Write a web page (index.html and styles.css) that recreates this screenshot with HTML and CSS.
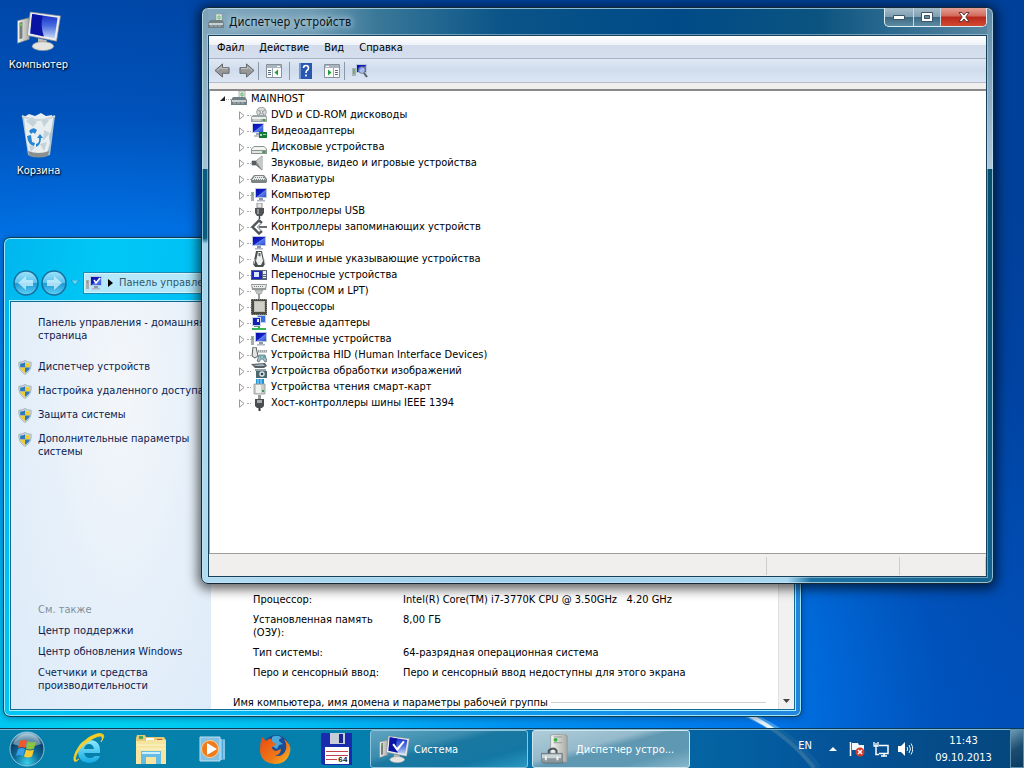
FILE: index.html
```html
<!DOCTYPE html>
<html lang="ru">
<head>
<meta charset="utf-8">
<title>Диспетчер устройств</title>
<link rel="stylesheet" href="styles.css">
</head>
<body>
<svg class="sprite" aria-hidden="true">
  <defs>
    <linearGradient id="g-screen" x1="0" y1="0" x2="1" y2="1"><stop offset="0" stop-color="#0a10a8"/><stop offset=".5" stop-color="#1420c8"/><stop offset=".55" stop-color="#5f80ea"/><stop offset="1" stop-color="#2c50d8"/></linearGradient>
    <linearGradient id="g-case" x1="0" y1="0" x2="1" y2="0"><stop offset="0" stop-color="#f6f6f2"/><stop offset="1" stop-color="#a8aaa6"/></linearGradient>
    <linearGradient id="g-big" x1="0" y1="0" x2="0" y2="1"><stop offset="0" stop-color="#1428c8"/><stop offset=".5" stop-color="#4a6ee0"/><stop offset="1" stop-color="#c8d8f8"/></linearGradient>
    <radialGradient id="g-orb" cx=".5" cy=".9" r=".9"><stop offset="0" stop-color="#38d0e8"/><stop offset=".4" stop-color="#0f6f9c"/><stop offset=".75" stop-color="#0a3f66"/><stop offset="1" stop-color="#a4cfe0"/></radialGradient>
    <linearGradient id="g-ie" x1="0" y1="0" x2="0" y2="1"><stop offset="0" stop-color="#8feaff"/><stop offset="1" stop-color="#12a8e0"/></linearGradient>
    <linearGradient id="g-nav" x1="0" y1="0" x2="0" y2="1"><stop offset="0" stop-color="#9fe4fb"/><stop offset=".48" stop-color="#5cc3ee"/><stop offset=".52" stop-color="#1f9ad4"/><stop offset="1" stop-color="#5ed2f8"/></linearGradient>
    <linearGradient id="g-fox" x1="0" y1="0" x2="1" y2="1"><stop offset="0" stop-color="#e84a10"/><stop offset=".6" stop-color="#f07818"/><stop offset="1" stop-color="#ffc020"/></linearGradient>
  </defs>
  <symbol id="i-pc" viewBox="0 0 46 42">
    <path d="M1 10l12-3v22L1 33z" fill="url(#g-case)" stroke="#7d8484" stroke-width=".7"/><path d="M3 12l3-1v17l-3 1z" fill="#777d7b"/><circle cx="4.500" cy="14" r="1.200" fill="#65d040"/>
    <path d="M14 1l31 4-4 26-30-6z" fill="#ececea" stroke="#858a90" stroke-width=".7"/><path d="M16 3l26 4-3 21-25-5z" fill="url(#g-big)"/><path d="M16 3l11 2q-3 9 1 21l-14-3z" fill="#0a14a4"/>
    <path d="M22 28l9 2-1 6h-8z" fill="#b8b8b4"/><ellipse cx="27" cy="36" rx="11" ry="4.500" fill="#e4e4e0" stroke="#9a9c98" stroke-width=".7"/>
  </symbol>
  <symbol id="i-bin" viewBox="0 0 37 46">
    <path d="M2 4h33l-5 39q-11 4-22 0z" fill="#a8c3d2"/><path d="M4 5l5-3 6 2 6-3 5 3 6-1 1 4-2 12-2 5 1 7-3 10-18 1-3-16z" fill="#e9eef0"/>
    <path d="M6 9l6-4 5 5-4 5zM21 7l8 1-5 7zM24 18l6 3-7 8zM20 32l7-2-3 9zM9 33l6 2-4 5z" fill="#c4d2da"/>
    <path d="M2 4q17 8 33 0" fill="none" stroke="#cbd6da" stroke-width="2"/>
    <path d="M9 19q4-5 8-1l-2 4q-2-3-4 0zM7 24l4-1 1 7 3 1-1 3q-6-1-7-10zM16 32q4-1 3-6h-2l3-4 3 4h-2q0 7-5 9z" fill="#2585d5"/><path d="M8 39q11 4 21 0l-1 5q-10 3-19 0z" fill="#8a8f90"/>
  </symbol>
  <symbol id="i-tools" viewBox="0 0 16 16"><path d="M8 0h6v10H8z" fill="#edf1ea" stroke="#8a9890" stroke-width=".7"/><path d="M10 2h2v3h-2z" fill="none" stroke="#62b070"/><path d="M0 9l2-3h12l2 3v5H0z" fill="#708086"/><path d="M1 9h14v2H1z" fill="#c8d0d2"/><path d="M2 12h12" stroke="#aab6ba" stroke-dasharray="3 1"/></symbol>
  <symbol id="i-dvd" viewBox="0 0 16 16"><circle cx="10.500" cy="5" r="4.800" fill="#d8dcdc" stroke="#888f8f" stroke-width=".8"/><path d="M7 3l3 2-2 3M14 3l-3 2 2 3" fill="none" stroke="#687070" stroke-width=".7"/><circle cx="10.500" cy="5" r="1.300" fill="#fff" stroke="#777" stroke-width=".6"/><path d="M0 10l2-2h13l1 2v5H0z" fill="#9aa4a2"/><path d="M1 10h14v2H1z" fill="#eef0ee"/><path d="M2 13h8" stroke="#f0f0f0"/><path d="M12 12h2v2h-2z" fill="#3ba044"/></symbol>
  <symbol id="i-video" viewBox="0 0 16 16"><path d="M1 0h12v10H1z" fill="#c8d0e4"/><path d="M2 1h10v8H2z" fill="url(#g-screen)"/><path d="M5 10h4v2H5z" fill="#9aa6bc"/><path d="M3 12h6v2H3z" fill="#c0c6d4"/><path d="M8 9h8v6H8z" fill="#177a38"/><path d="M9 11h2v2H9zM12 11h3v1h-3z" fill="#a7dfa0"/></symbol>
  <symbol id="i-disk" viewBox="0 0 16 16"><path d="M0 10l3-3h10l3 3v5H0z" fill="#8b9591"/><path d="M1 10l2-2h10l2 2v1H1z" fill="#f2f4f2"/><path d="M1 12h10v2H1z" fill="#dfe4df"/><path d="M12 12h2v2h-2z" fill="#37a745"/></symbol>
  <symbol id="i-sound" viewBox="0 0 16 16"><path d="M1 6h4l6-5v14l-6-5H1z" fill="#7d8484" stroke="#5f6668" stroke-width=".7"/><path d="M5 6l6-5v14z" fill="#c4cac8"/><path d="M1 6h4v4H1z" fill="#555d60"/></symbol>
  <symbol id="i-kbd" viewBox="0 0 16 16"><path d="M3 4h10l3 4v3l-1 1H1l-1-1V8z" fill="#7c8486"/><path d="M4 5h8l3 4H1z" fill="#e8eaea"/><path d="M4 6.500h9M3 8.500h11" stroke="#7e8688" stroke-dasharray="1 1"/></symbol>
  <symbol id="i-mon" viewBox="0 0 16 16"><path d="M1 1h14v10H1z" fill="#bfc7dc"/><path d="M2 2h12v8H2z" fill="url(#g-screen)"/><path d="M6 11h4v2H6z" fill="#8c98ae"/><path d="M4 13h8v1.500H4z" fill="#aeb6c6"/></symbol>
  <symbol id="i-comp" viewBox="0 0 16 16"><path d="M0 5h3v9H0z" fill="#a6adad"/><path d="M1 6h1v2H1z" fill="#50b548"/><path d="M4 1h12v10H4z" fill="#bfc7dc"/><path d="M5 2h10v8H5z" fill="url(#g-screen)"/><path d="M8 11h4v2H8z" fill="#8c98ae"/><path d="M6 13h8v1.500H6z" fill="#aeb6c6"/></symbol>
  <symbol id="i-usb" viewBox="0 0 16 16"><path d="M6 0h5v5H6z" fill="#e6e6e6" stroke="#787878" stroke-width=".8"/><path d="M4 5h9v5l-2 3H6l-2-3z" fill="#505356"/><path d="M6 6h2v5H6z" fill="#909496"/><path d="M8.500 13v3" stroke="#444" stroke-width="1.500"/></symbol>
  <symbol id="i-ctrl" viewBox="0 0 16 16"><path d="M11 4L8 1.500 1.500 8 8 14.500 11 12" fill="none" stroke="#4f5558" stroke-width="2.400"/><path d="M10 4.500L6.500 8l3.500 3.500" fill="none" stroke="#a4aaac" stroke-width="1.400"/><path d="M8 7h8v2H8z" fill="#6a7072"/></symbol>
  <symbol id="i-mouse" viewBox="0 0 16 16"><path d="M5 0h6l1 5 2 8-2 3H4l-2-3 2-8z" fill="#4b5053"/><path d="M7 1h3l2 9-2 4H7l-2-4z" fill="#f0f2f0"/><path d="M7.500 2v3l2 .5V2z" fill="#666"/><path d="M4 8l-1 5M13 8l1 5" stroke="#c8cccc"/></symbol>
  <symbol id="i-port" viewBox="0 0 16 16"><path d="M0 3h16v10H0z" fill="#59647c"/><path d="M1 4h10v8H1z" fill="#1a28bd"/><path d="M3 5h5v5H3z" fill="#dce6ff"/><path d="M12 4h3v3h-3zM12 8h3v1h-3zM12 10h3v1h-3z" fill="#e9ecf0"/></symbol>
  <symbol id="i-com" viewBox="0 0 16 16"><path d="M0 1h16l-1 6H1z" fill="#949b9b"/><path d="M1 2h14l-1 3H2z" fill="#e9ecea"/><path d="M3 3.500h10" stroke="#737a7a" stroke-dasharray="1 1"/><path d="M4 7h8l-2 4H6z" fill="#c1c6c4" stroke="#8a9090" stroke-width=".6"/><path d="M7 11h2v5H7z" fill="#999f9f"/></symbol>
  <symbol id="i-cpu" viewBox="0 0 16 16"><path d="M0 0h16v16H0z" fill="#4c4b44"/><path d="M0 15.500h16M15.500 0v16M0 .500h16M.500 0v16" stroke="#8a877a" stroke-dasharray="1 1"/><path d="M3 2h11v11H3z" fill="#bdbcb4"/><path d="M4 3h9v9H4z" fill="#d0cfc8"/></symbol>
  <symbol id="i-net" viewBox="0 0 16 16"><path d="M6 0h9v8H6z" fill="#b9cbe8"/><path d="M7 1h7v6H7z" fill="#3a70e0"/><path d="M1 2h9v9H1z" fill="#ccd5e8"/><path d="M2 3h7v7H2z" fill="#1220ba"/><path d="M6 4h2v3H6z" fill="#dfe8ff"/><path d="M3 11h5v1H3z" fill="#7b879a"/><path d="M1 14h14M8 11v4" stroke="#38b559" stroke-width="2"/></symbol>
  <symbol id="i-hid" viewBox="0 0 16 16"><path d="M2 0h3l2 9-3 2-3-2z" fill="#e3e5e4" stroke="#535a5d"/><path d="M7 3h9v3H7z" fill="#c8cece"/><path d="M7 4h9" stroke="#777" stroke-dasharray="1 1"/><path d="M6 14l2-6h6l2 6-2 1-2-3h-2l-2 3z" fill="#9fbec6" stroke="#5b717a" stroke-width=".8"/><path d="M9 10h1M12 10h2" stroke="#178a9a"/></symbol>
  <symbol id="i-img" viewBox="0 0 16 16"><path d="M0 1l14-1 2 3-3 2H4z" fill="#596166"/><path d="M2 2l10-1 2 2H5z" fill="#9fb4bc"/><path d="M4 6h11v2H4z" fill="#8fa6ac"/><path d="M5 8h11v7H5z" fill="#4e6870"/><circle cx="11" cy="11" r="2.700" fill="#dce8ec"/><circle cx="11" cy="11" r="1.300" fill="#33444a"/></symbol>
  <symbol id="i-card" viewBox="0 0 16 16"><path d="M5 0h8v5H5z" fill="#1d94dc"/><path d="M7 0v5M10 0v5" stroke="#b5e1fa"/><path d="M3 5h11v10H3z" fill="#c9cecb" stroke="#929996" stroke-width=".8"/><path d="M5 6h5v8H5z" fill="#f0f2f0"/><path d="M11 11h2v2h-2z" fill="#359f4b"/></symbol>
  <symbol id="i-1394" viewBox="0 0 16 16"><path d="M7 0h3v4H7z" fill="#999"/><path d="M4 4h9v7l-2 2H6l-2-2z" fill="#4a4d50"/><path d="M6 5h5v3H6z" fill="#a5a9aa"/><path d="M8.500 13v3" stroke="#333" stroke-width="2"/></symbol>
  <symbol id="i-shield" viewBox="0 0 16 16"><path d="M8 0q3 2 7 2 1 9-7 14Q0 11 1 2q4 0 7-2z" fill="#d5dce0" stroke="#7f909a" stroke-width=".7"/><path d="M8 2v6H2.500V3.500Q6 3.500 8 2z" fill="#2a7abf"/><path d="M8 2q2 1.500 5.500 1.500V8H8z" fill="#f2cb30"/><path d="M2.500 8H8v6Q3 11.500 2.500 8z" fill="#f2cb30"/><path d="M8 8h5.500Q13 11.500 8 14z" fill="#2a7abf"/></symbol>
  <symbol id="i-arrow" viewBox="0 0 18 16"><path d="M1 8l8-7v4h7v6H9v4z" fill="#979797" stroke="#5e6266"/><path d="M3 8l5-4v2h7" fill="none" stroke="#c9c9c9"/></symbol>
  <symbol id="i-panel" viewBox="0 0 16 14"><path d="M.500.500h15v13H.500z" fill="#fafafa" stroke="#87919c"/><path d="M1 1h14v3H1z" fill="#aab4bf"/><path d="M11 2.500h3" stroke="#fff"/><path d="M2 6.500h3M2 8.500h3M2 10.500h3" stroke="#5c6c80"/><path d="M6.500 4v9" stroke="#9aa4ae"/><path d="M12 5.500v6L8.500 8.500z" fill="#1f9f38"/></symbol>
</svg>

<main class="desktop">
  <svg class="streak" viewBox="0 0 100 60" aria-hidden="true"><path d="M2 0Q60 22 88 60" fill="none" stroke="#bff2ff" stroke-width="7" opacity=".35"/><path d="M4 0Q55 22 84 60" fill="none" stroke="#f4fdff" stroke-width="4" opacity=".9"/></svg>

  <nav class="shortcuts" aria-label="Рабочий стол">
    <a class="shortcut" href="#computer"><svg class="shortcut-pc"><use href="#i-pc"/></svg>Компьютер</a>
    <a class="shortcut" href="#bin"><svg class="shortcut-bin"><use href="#i-bin"/></svg>Корзина</a>
  </nav>

  <section class="window system" aria-label="Система">
    <header class="explorer-bar">
      <button class="nav-button" aria-label="Назад"><svg viewBox="0 0 26 26"><circle cx="13" cy="13" r="12" fill="url(#g-nav)" stroke="#176f9d" stroke-width="1.500"/><path d="M5 13l8-7v4h7v6h-7v4z" fill="#c9effc" opacity=".8"/></svg></button>
      <button class="nav-button" aria-label="Вперед"><svg viewBox="0 0 26 26"><circle cx="13" cy="13" r="12" fill="url(#g-nav)" stroke="#176f9d" stroke-width="1.500"/><path d="M21 13l-8-7v4H6v6h7v4z" fill="#c9effc" opacity=".8"/></svg></button>
      <button class="nav-history" aria-label="Последние страницы"><svg viewBox="0 0 8 5"><path d="M0 0h8L4 5z" fill="#62d8fa" stroke="#1684b4" stroke-width=".6"/></svg></button>
      <div class="address"><svg class="icon" viewBox="0 0 16 16"><use href="#i-comp" width="16" height="16"/><path d="M8 5l2 3 4-5" fill="none" stroke="#fff" stroke-width="1.500"/></svg><svg class="crumb" viewBox="0 0 5 8"><path d="M0 0l5 4-5 4z"/></svg><a href="#panel">Панель управления</a></div>
    </header>
    <div class="system-body">
      <aside class="sidebar">
        <a class="side-home" href="#panel">Панель управления - домашняя страница</a>
        <a class="task" href="#devmgr"><svg class="shield"><use href="#i-shield"/></svg>Диспетчер устройств</a>
        <a class="task" href="#remote"><svg class="shield"><use href="#i-shield"/></svg>Настройка удаленного доступа</a>
        <a class="task" href="#protect"><svg class="shield"><use href="#i-shield"/></svg>Защита системы</a>
        <a class="task" href="#advanced"><svg class="shield"><use href="#i-shield"/></svg>Дополнительные параметры системы</a>
        <div class="see-also">
          <h2>См. также</h2>
          <a href="#support">Центр поддержки</a>
          <a href="#update">Центр обновления Windows</a>
          <a href="#perf">Счетчики и средства производительности</a>
        </div>
      </aside>
      <div class="details">
        <dl class="specs">
          <dt>Процессор:</dt><dd>Intel(R) Core(TM) i7-3770K CPU @ 3.50GHz &nbsp; 4.20 GHz</dd>
          <dt>Установленная память (ОЗУ):</dt><dd>8,00 ГБ</dd>
          <dt>Тип системы:</dt><dd>64-разрядная операционная система</dd>
          <dt>Перо и сенсорный ввод:</dt><dd>Перо и сенсорный ввод недоступны для этого экрана</dd>
        </dl>
        <h2 class="group-title">Имя компьютера, имя домена и параметры рабочей группы</h2>
      </div>
      <div class="scrollbar"><button aria-label="Прокрутить вниз"><svg viewBox="0 0 7 4"><path d="M0 0h7L3.500 4z" fill="#444"/></svg></button></div>
    </div>
  </section>

  <section class="window manager" aria-label="Диспетчер устройств">
    <header class="titlebar">
      <svg class="icon"><use href="#i-tools"/></svg>
      <h1>Диспетчер устройств</h1>
      <div class="caption">
        <button class="cap-min" aria-label="Свернуть"><svg viewBox="0 0 12 5"><path d="M.500.500h11v4H.500z" fill="#fff" stroke="#3c5468"/></svg></button>
        <button class="cap-max" aria-label="Развернуть"><svg viewBox="0 0 12 10"><path d="M.500.500h11v9H.500z" fill="#fff" stroke="#3c5468"/><path d="M3.500 3.500h5v3h-5z" fill="#6c8a9c" stroke="#3c5468"/></svg></button>
        <button class="cap-close" aria-label="Закрыть"><svg viewBox="0 0 12 10"><path d="M1 .500h3l2 2.500L8 .500h3L7.800 5 11 9.500H8L6 7 4 9.500H1L4.200 5z" fill="#fff" stroke="#5a2a2a" stroke-width=".9"/></svg></button>
      </div>
    </header>
    <div class="client">
      <nav class="menubar" aria-label="Меню"><button>Файл</button><button>Действие</button><button>Вид</button><button>Справка</button></nav>
      <div class="toolbar">
        <button aria-label="Назад"><svg class="tool-arrow"><use href="#i-arrow"/></svg></button>
        <button aria-label="Вперед"><svg class="tool-arrow flip"><use href="#i-arrow"/></svg></button>
        <span class="divider"></span>
        <button class="wide" aria-label="Показать дерево"><svg class="tool-panel"><use href="#i-panel"/></svg></button>
        <span class="divider"></span>
        <button class="wide" aria-label="Справка"><svg class="tool-help" viewBox="0 0 13 16"><path d="M0 0h13v16H0z" fill="#2856b0"/><path d="M0 0h2v16H0z" fill="#6e95d8"/><path d="M4.500 5q0-2.500 2.500-2.500T9.500 5q0 1.500-1.300 2.200Q7 8 7 10M7 11.500v2" fill="none" stroke="#fff" stroke-width="1.600"/></svg></button>
        <button aria-label="Область действий"><svg class="tool-panel flip"><use href="#i-panel"/></svg></button>
        <span class="divider"></span>
        <button class="wide" aria-label="Обновить конфигурацию оборудования"><svg class="icon" viewBox="0 0 16 16"><path d="M0 5h4v8H0z" fill="#a9b2b4"/><path d="M2 6v5" stroke="#49a34c"/><path d="M4 1h11v9H4z" fill="#b9c6dc"/><path d="M5 2h9v7H5z" fill="url(#g-screen)"/><circle cx="10" cy="7" r="3.300" fill="#e0f0fc" fill-opacity=".6" stroke="#62728a"/><path d="M12 10l3 4" stroke="#505e70" stroke-width="2"/></svg></button>
      </div>
      <ul class="tree">
        <li class="root"><svg class="open" viewBox="0 0 7 7"><path d="M6 1v5H1z" fill="#222"/></svg><span class="dots"></span><svg class="icon"><use href="#i-tools"/></svg>MAINHOST
          <ul class="branch" id="branch"></ul>
        </li>
      </ul>
      <footer class="statusbar"><span class="status-main"></span><span class="status-mid"></span><span class="status-end"></span></footer>
    </div>
  </section>

  <footer class="taskbar">
    <button class="start" aria-label="Пуск"><svg viewBox="0 0 36 36"><circle cx="18" cy="18" r="17" fill="url(#g-orb)" stroke="#8cc4dc"/><path d="M4 13Q8 3 18 2.500T32 13Q18 19 4 13z" fill="#d8f0f8" opacity=".45"/><path d="M11 10q4-2 7 0l-2 7q-3-2-7 0z" fill="#f0582a"/><path d="M19 10.500q4 2 8 0l-2 7q-4 2-8 0z" fill="#8cc63e"/><path d="M9 18q4-2 7 0l-2 7q-3-2-7 0z" fill="#34a0e8"/><path d="M17 18.500q4 2 8 0l-2 7q-4 2-8 0z" fill="#fccb30"/></svg></button>
    <nav class="pinned" aria-label="Закрепленные программы">
      <button aria-label="Internet Explorer"><svg class="app" viewBox="0 0 32 32"><path d="M27 20H11q1 5 6 5 3 0 5-2h5q-3 7-11 7Q5 29 5 18.500T16 7q12 0 11 13zM11 16h10q-1-5-5-5-4 0-5 5z" fill="url(#g-ie)" fill-rule="evenodd"/><path d="M6 26q-5 4-3-3 3-9 13-15 11-7 13-4 1 2-1 5 5-7 1-8-4-2-14 4Q3 14 1 24q-1 8 5 2z" fill="#f7cf25" stroke="#f7cf25" stroke-width=".8"/></svg></button>
      <button aria-label="Проводник"><svg class="app" viewBox="0 0 32 32"><path d="M1 5l1-3h8l1 2h18l2 3v23H1z" fill="#e8c873"/><path d="M4 3h4v3H4z" fill="#49a55c"/><path d="M11 5h8v4h-8z" fill="#fff"/><path d="M22 6h5v2h-5z" fill="#cf5a48"/><path d="M1 8h10l2-1h18v24H1z" fill="#f6e5a0"/><path d="M2 12h28M2 16h28" stroke="#fff6cc"/><path d="M6 18h20v13h-5v-7H11v7H6z" fill="#62bce4"/><path d="M7 20h18" stroke="#caf0ff" stroke-width="2"/></svg></button>
      <button aria-label="Проигрыватель"><svg class="app" viewBox="0 0 32 32"><path d="M22 6h6v21h-6z" fill="#4ea8d8"/><path d="M24 6v21M27 7v19" stroke="#b8e2f5"/><path d="M3 4h20v24H3z" fill="#83c0e2" stroke="#c0e2f2"/><circle cx="13" cy="16" r="8.500" fill="#ee7b1c" stroke="#ffcf94"/><path d="M10 10l10 6-10 6z" fill="#fff"/></svg></button>
      <button aria-label="Firefox"><svg class="app" viewBox="0 0 32 32"><circle cx="17" cy="15" r="13" fill="#1b4e94"/><path d="M13 4q6-3 10 1-3 0-3 3l4 3-4 1-2 4-5-3z" fill="#49a8dc"/><path d="M3 4l4 4q3-3 6-2-1 2 2 4l3 1-5 3q0 3 4 4l5-2q0 5-6 7 9 1 11-7 1-5-2-10 8 6 6 13-3 12-15 12Q2 30 1 18 1 10 3 4z" fill="url(#g-fox)"/></svg></button>
      <button aria-label="Total Commander"><svg class="app" viewBox="0 0 32 32"><path d="M1 0h30v32H2l-2-2V1z" fill="#1a2cae"/><path d="M9 0h15v11H9z" fill="#c6ccd8"/><path d="M18 1h4v9h-4z" fill="#1a2590"/><path d="M4 14h24v17H4z" fill="#fff"/><path d="M5 18.500h22M5 22.500h22M5 26.500h11" stroke="#c4404c"/><text x="17" y="29" class="badge64">64</text></svg></button>
    </nav>
    <div class="tasks">
      <button class="taskbutton"><svg class="task-icon" viewBox="0 0 46 42"><use href="#i-pc" width="46" height="42"/><path d="M21 13l6 8L37 9" fill="none" stroke="#fff" stroke-width="3"/></svg><span>Система</span></button>
      <button class="taskbutton active"><svg class="task-icon" viewBox="0 0 32 32"><path d="M10 1l14-1 3 2v27H13l-3-2z" fill="url(#g-case)" stroke="#878d8c" stroke-width=".7"/><path d="M13 3h9M13 9h9" stroke="#959d98"/><circle cx="15" cy="6" r="2" fill="#36ae42"/><path d="M8 20v-3q5-4 8 0v3" fill="none" stroke="#4b5458" stroke-width="2"/><path d="M0 20h22v10H2l-2-2z" fill="#8b979c" stroke="#5d686d" stroke-width=".7"/><path d="M1 21h20v4H1z" fill="#cbd4d7"/><path d="M5 23v4M17 23v4" stroke="#eef4f4" stroke-width="2"/></svg><span>Диспетчер устро...</span></button>
    </div>
    <div class="tray">
      <button class="lang">EN</button>
      <button aria-label="Отображать скрытые значки"><svg class="tray-up" viewBox="0 0 8 4"><path d="M0 4l4-4 4 4z" fill="#fff"/></svg></button>
      <button aria-label="Центр поддержки"><svg class="icon" viewBox="0 0 16 16"><path d="M1.500 1v14" stroke="#fff" stroke-width="1.500"/><path d="M3 2h6l1 2h5v7H9L8 9H3z" fill="#f4f8fa"/><circle cx="11" cy="11" r="4.500" fill="#d33a2c"/><path d="M9 9l4 4M13 9l-4 4" stroke="#fff" stroke-width="1.500"/></svg></button>
      <button aria-label="Сеть"><svg class="icon" viewBox="0 0 16 16"><path d="M6 4.500h9v8H6M8 15h6M11 13v2M3 7v6.500h3" fill="none" stroke="#fff" stroke-width="1.500"/><path d="M1 1v4h4V1M3 2v5" fill="none" stroke="#fff" stroke-width="1.300"/></svg></button>
      <button aria-label="Громкость"><svg class="icon" viewBox="0 0 16 16"><path d="M1 5h3l4-4v14l-4-4H1z" fill="#fff"/><path d="M10 6q1.500 2 0 4M12 4q3 4 0 8M14 2.500q3.500 5.500 0 11" fill="none" stroke="#e4f4fa"/></svg></button>
      <button class="clock"><time>11:43</time><time>09.10.2013</time></button>
      <button class="peek" aria-label="Свернуть все окна"></button>
    </div>
  </footer>
</main>
<script src="devices.js"></script>
</body>
</html>
```
FILE: devices.js
```js
const devices = [
  ["dvd", "DVD и CD-ROM дисководы"],
  ["video", "Видеоадаптеры"],
  ["disk", "Дисковые устройства"],
  ["sound", "Звуковые, видео и игровые устройства"],
  ["kbd", "Клавиатуры"],
  ["comp", "Компьютер"],
  ["usb", "Контроллеры USB"],
  ["ctrl", "Контроллеры запоминающих устройств"],
  ["mon", "Мониторы"],
  ["mouse", "Мыши и иные указывающие устройства"],
  ["port", "Переносные устройства"],
  ["com", "Порты (COM и LPT)"],
  ["cpu", "Процессоры"],
  ["net", "Сетевые адаптеры"],
  ["comp", "Системные устройства"],
  ["hid", "Устройства HID (Human Interface Devices)"],
  ["img", "Устройства обработки изображений"],
  ["card", "Устройства чтения смарт-карт"],
  ["1394", "Хост-контроллеры шины IEEE 1394"]
];

document.getElementById("branch").innerHTML = devices.map(([icon, name]) => `
  <li class="device">
    <svg class="closed" viewBox="0 0 6 9"><path d="M.500.800L5 4.500.500 8.200z" fill="#fff" stroke="#999"/></svg>
    <span class="dots"></span>
    <svg class="icon"><use href="#i-${icon}"/></svg>
    <span>${name}</span>
  </li>`).join("");
```
FILE: styles.css
```css
* {
  box-sizing: border-box;
}

body {
  margin: 0;
  font: 11px/13px "DejaVu Sans Condensed", "Noto Sans", sans-serif;
  color: #000;
}

button {
  display: flex;
  align-items: center;
  justify-content: center;
  margin: 0;
  padding: 0;
  border: 0;
  background: none;
  font: inherit;
  color: inherit;
}

a {
  color: inherit;
  text-decoration: none;
}

h1,
h2,
ul,
dl,
dd {
  margin: 0;
  padding: 0;
  font: inherit;
  list-style: none;
}

.sprite {
  position: absolute;
  width: 0;
  height: 0;
}

.icon {
  width: 16px;
  height: 16px;
  flex: none;
}

/* Desktop */
.desktop {
  position: relative;
  height: 100vh;
  overflow: hidden;
  background:
    radial-gradient(ellipse 100% 96% at 10% 94%, #00d2f0 0, #00bcf4 20%, #0092f0 40%, #0074e8 65%, #005ac8a0 82%, #0046a800 100%),
    linear-gradient(115deg, #0046a8 0, #00439c 50%, #00409a 80%, #0049b0 100%);
}

.streak {
  position: absolute;
  left: 730px;
  bottom: 0;
  width: 100px;
  height: 60px;
}

.shortcuts {
  display: flex;
  flex-direction: column;
  gap: 40px;
  width: 77px;
  padding-top: 11px;
}

.shortcut {
  display: flex;
  flex-direction: column;
  align-items: center;
  gap: 6px;
  line-height: 14px;
  color: #fff;
  text-shadow: 1px 1px 2px #000, 0 1px 2px #001c50;
}

.shortcut-pc {
  width: 46px;
  height: 41px;
}

.shortcut-bin {
  width: 37px;
  height: 46px;
}

/* Windows */
.window {
  position: absolute;
  display: flex;
  flex-direction: column;
  padding: 0 6px 6px;
  border: 1px solid #123c50;
  border-radius: 7px;
}

.system {
  left: 3px;
  top: 237px;
  width: 799px;
  bottom: 51px;
  background: linear-gradient(100deg, #00b6ee 0, #00c8f6 12%, #00b0f4 45%, #1690ec 80%, #2484dc 100%);
  box-shadow: inset 0 0 0 1px #9be8fb, 0 1px 6px #00306080;
}

.explorer-bar {
  display: flex;
  flex: none;
  align-items: center;
  gap: 2px;
  height: 63px;
  padding: 26px 0 0 3px;
}

.nav-button svg {
  width: 26px;
  height: 26px;
}

.nav-history {
  width: 12px;
}

.nav-history svg {
  width: 8px;
  height: 5px;
}

.address {
  display: flex;
  flex: 1;
  align-items: center;
  gap: 6px;
  height: 22px;
  padding: 0 2px;
  border: 1px solid #2187ad;
  background: #b4e8fa;
  box-shadow: inset 0 0 0 1px #d6f5ff;
  color: #34576c;
}

.crumb {
  width: 5px;
  height: 8px;
}

.system-body {
  display: flex;
  flex: 1;
  min-height: 0;
  border: 1px solid #116a92;
  background: #fff;
  outline: 1px solid #a6eefb;
}

.sidebar {
  display: flex;
  flex: none;
  flex-direction: column;
  gap: 11px;
  width: 200px;
  padding: 14px 0 17px 7px;
  background: radial-gradient(ellipse at 55% 20%, #f4f6f9 0, #e6f0fa 50%, #dceaf8 100%);
  color: #0c1c50;
}

.side-home {
  margin-bottom: 7px;
  padding-left: 20px;
}

.task {
  display: flex;
  gap: 6px;
}

.shield {
  flex: none;
  width: 14px;
  height: 15px;
  margin-bottom: -2px;
}

.see-also {
  display: flex;
  flex-direction: column;
  gap: 8px;
  margin-top: auto;
  padding-left: 20px;
}

.see-also h2 {
  color: #848f9c;
}

.details {
  display: flex;
  flex: 1;
  flex-direction: column;
  justify-content: flex-end;
  gap: 17px;
  padding: 0 12px 0 22px;
}

.specs {
  display: grid;
  grid-template-columns: 130px 1fr;
  gap: 7px 20px;
  padding-left: 20px;
}

.group-title {
  display: flex;
  align-items: center;
  gap: 3px;
}

.group-title::after {
  content: "";
  flex: 1;
  height: 1px;
  background: #d0d0d0;
}

.scrollbar {
  display: flex;
  flex: none;
  align-items: flex-end;
  width: 16px;
  border-left: 1px solid #e2e2e2;
  background: #f1f1f1;
}

.scrollbar button {
  width: 100%;
  height: 16px;
}

.scrollbar svg {
  width: 7px;
  height: 4px;
}

.manager {
  left: 201px;
  right: 30px;
  top: 7px;
  bottom: 184px;
  border-color: #142838;
  background:
    linear-gradient(90deg, #b2dcf2 0, #9fd0ec 35%, #a9d8f0 74%, #1c72a4 77%, #14648e 100%) left bottom / 100% 6px no-repeat,
    linear-gradient(180deg, #7ca0b4 0, #a3c3d4 28%, #075c80 28%, #075c80 40%, #a4d4ea 41%, #b0dcf2 100%) left / 6px 100% no-repeat,
    linear-gradient(180deg, #5f8aa4 0, #b0c8da 28%, #04506c 28%, #0f6490 100%) right / 6px 100% no-repeat,
    linear-gradient(90deg, #83a8be 0, #6f9cb4 14%, #3a7898 22%, #0a5488 38%, #004a88 60%, #0b5480 78%, #5a88a2 100%);
  box-shadow: inset 0 0 0 1px #c8e6f4b0, 0 2px 12px 3px #000000a0;
}

.titlebar {
  display: flex;
  flex: none;
  align-items: center;
  gap: 5px;
  height: 27px;
}

.titlebar h1 {
  font-size: 12px;
  line-height: 16px;
  color: #0a1420;
  text-shadow: 0 0 6px #d6e8f0, 0 0 10px #c4dce8;
}

.caption {
  display: flex;
  align-self: flex-start;
  height: 19px;
  margin-left: auto;
  border: 1px solid #dcecf4;
  border-top: 0;
  border-radius: 0 0 5px 5px;
  background: linear-gradient(#a4bccb 0, #7f9fb2 48%, #3c6780 50%, #5d8ba4 100%);
  overflow: hidden;
}

.caption button + button {
  border-left: 1px solid #c4d8e2;
}

.caption svg {
  width: 12px;
  height: 10px;
}

.caption .cap-min {
  width: 28px;
}

.caption .cap-min svg {
  height: 5px;
}

.caption .cap-max {
  width: 27px;
}

.caption .cap-close {
  width: 46px;
  background: linear-gradient(#e4a095 0, #d2685a 45%, #b8281c 50%, #d24a32 100%);
}

.client {
  display: flex;
  flex: 1;
  flex-direction: column;
  min-height: 0;
  border: 1px solid #16405c;
  background: #f0efee;
  outline: 1px solid #c4e0ec80;
}

.menubar {
  display: flex;
  flex: none;
  gap: 15px;
  height: 23px;
  padding: 0 8px;
  border-bottom: 1px solid #a8b4c4;
  background: linear-gradient(#fff 0, #eef2f8 40%, #d2dcea 42%, #d4deee 100%);
}

.toolbar {
  display: flex;
  flex: none;
  align-items: center;
  height: 24px;
  padding-left: 1px;
  border-bottom: 1px solid #b4bcc8;
  background: linear-gradient(#e0e8f4 0, #d0dcec 45%, #dce6f4 100%);
}

.toolbar button {
  width: 24px;
  height: 22px;
}

.toolbar .wide {
  width: 30px;
}

.divider {
  width: 1px;
  height: 18px;
  background: #8c98a8;
}

.tool-arrow {
  width: 17px;
  height: 15px;
}

.tool-panel {
  width: 16px;
  height: 14px;
}

.tool-help {
  width: 13px;
  height: 16px;
}

.flip {
  transform: scaleX(-1);
}

.tree {
  flex: 1;
  min-height: 0;
  margin-top: 6px;
  padding-left: 9px;
  border-top: 2px solid #8a8888;
  border-left: 1px solid #a8a8a8;
  background: #fff;
  line-height: 16px;
}

.root .icon {
  margin-right: 4px;
  vertical-align: top;
}

.open {
  width: 7px;
  height: 7px;
}

.dots {
  display: inline-block;
  width: 5px;
  height: 9px;
  border-bottom: 1px dotted #aaa;
  vertical-align: top;
}

.device {
  display: flex;
  height: 16px;
  padding-left: 20px;
}

.closed {
  width: 6px;
  height: 9px;
  margin: 4px 2px 0 0;
}

.device .icon {
  margin: 0 4px 0 0;
}

.device .dots {
  width: 4px;
}

.statusbar {
  display: flex;
  flex: none;
  height: 23px;
  padding: 3px 0 1px;
  border-top: 1px solid #9c9c9c;
}

.statusbar span {
  border-right: 1px solid #cfcdcb;
}

.status-main {
  flex: 1;
}

.status-mid {
  width: 133px;
}

.status-end {
  width: 86px;
}

/* Taskbar */
.taskbar {
  position: absolute;
  left: 0;
  right: 0;
  bottom: 0;
  display: flex;
  height: 40px;
  border-top: 1px solid #0a3b5a;
  background: linear-gradient(90deg, #0678a4e8 0, #057aa6e8 40%, #05649ae0 65%, #05508cd0 80%, #064676e0 100%);
  box-shadow: inset 0 1px 0 #7fb9d4;
  color: #fff;
}

.start {
  width: 54px;
}

.start svg {
  width: 36px;
  height: 36px;
}

.pinned {
  display: flex;
  margin: 0 2px 0 4px;
}

.pinned button {
  width: 62px;
}

.app {
  width: 32px;
  height: 32px;
}

.badge64 {
  font: bold 8px "Liberation Mono", monospace;
  fill: #222;
}

.tasks {
  display: flex;
  flex: 0 1 320px;
  gap: 4px;
  min-width: 0;
}

.taskbutton {
  flex: 1;
  gap: 4px;
  min-width: 0;
  height: 38px;
  margin-top: 1px;
  padding: 0 8px;
  justify-content: flex-start;
  border: 1px solid #8fc4dc;
  border-radius: 3px;
  background: linear-gradient(165deg, #5fa4c0 0, #3a8cae 35%, #1a78a0 45%, #1478a4 75%, #2a98c0 100%);
}

.taskbutton.active {
  border-color: #cfe6f0;
  background: linear-gradient(165deg, #b0ccd8 0, #94bacb 38%, #6098b2 48%, #5e98b2 75%, #88b8cc 100%);
}

.taskbutton span {
  white-space: nowrap;
}

.task-icon {
  flex: none;
  width: 31px;
  height: 31px;
}

.tray {
  display: flex;
  align-items: stretch;
  margin-left: auto;
}

.tray button {
  width: 24px;
}

.tray .lang {
  width: 32px;
  padding-bottom: 6px;
}

.tray-up {
  width: 8px;
  height: 4px;
}

.tray .clock {
  flex-direction: column;
  gap: 4px;
  width: 93px;
}

.tray .peek {
  width: 14px;
  border: 1px solid #5c90ac;
  background: linear-gradient(150deg, #6c9cb4 0, #1c4c70 50%, #0a3a60 100%);
}
```
